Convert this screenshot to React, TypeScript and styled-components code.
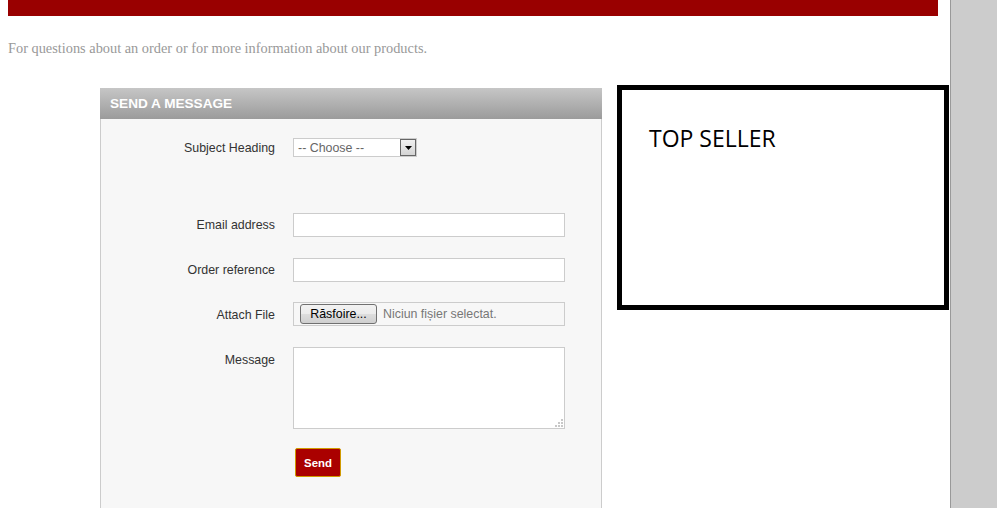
import styled, { createGlobalStyle } from "styled-components";

const GlobalStyle = createGlobalStyle`
  html, body {
    margin: 0;
    padding: 0;
    background: #ffffff;
  }
  body {
    font-family: "Liberation Sans", Arial, sans-serif;
  }
`;

const Page = styled.div`
  display: flex;
  height: 508px;
  overflow: hidden;
`;

const Main = styled.div`
  width: 950px;
  flex-shrink: 0;
  padding-left: 8px;
  box-sizing: border-box;
`;

const Sidebar = styled.div`
  flex: 1;
  background: #cccccc;
  border-left: 1px solid #999999;
`;

const TopBar = styled.div`
  width: 930px;
  height: 16px;
  background: #990000;
`;

const Intro = styled.p`
  margin: 24px 0 0;
  font-family: "Liberation Serif", "Times New Roman", serif;
  font-size: 14.35px;
  line-height: 16px;
  color: #999999;
`;

const ContentRow = styled.div`
  display: flex;
  align-items: flex-start;
  margin-top: 29px;
`;

const FormBox = styled.div`
  width: 502px;
  margin: 3px 0 0 92px;
  flex-shrink: 0;
`;

const FormHeader = styled.h3`
  margin: 0;
  height: 31px;
  padding-left: 10px;
  background: linear-gradient(to bottom, #c6c6c6 0%, #9b9b9b 100%);
  color: #ffffff;
  font-size: 13.6px;
  font-weight: bold;
  line-height: 31px;
`;

const FormBody = styled.div`
  background: #f7f7f7;
  border-left: 1px solid #cccccc;
  border-right: 1px solid #cccccc;
  padding: 19px 0 40px;
  min-height: 380px;
`;

const FormRow = styled.div<{ $gap: number; $top?: boolean }>`
  display: grid;
  grid-template-columns: 174px 272px;
  column-gap: 18px;
  align-items: ${({ $top }) => ($top ? "start" : "center")};
  margin-top: ${({ $gap }) => $gap}px;
`;

const Label = styled.label<{ $offset?: number }>`
  text-align: right;
  font-size: 12.4px;
  color: #333333;
  padding-top: ${({ $offset }) => $offset || 0}px;
`;

const FakeSelect = styled.div`
  width: 124px;
  height: 19px;
  box-sizing: border-box;
  border: 1px solid #cccccc;
  background: #ffffff;
  display: flex;
  align-items: center;
  justify-content: space-between;
  padding: 0 0 0 4px;
  font-size: 12.4px;
  color: #666666;
`;

const SelectArrow = styled.span`
  width: 16px;
  height: 17px;
  box-sizing: border-box;
  border: 1px solid #666666;
  background: linear-gradient(to bottom, #f0f0f0, #d4d4d4);
  display: flex;
  align-items: center;
  justify-content: center;
`;

const TextInput = styled.input`
  width: 272px;
  height: 24px;
  box-sizing: border-box;
  border: 1px solid #cccccc;
  background: #ffffff;
  margin: 0;
  padding: 0 4px;
  font-size: 12px;
`;

const FileBox = styled.div`
  width: 272px;
  height: 24px;
  box-sizing: border-box;
  border: 1px solid #cccccc;
  background: #f7f7f7;
  display: flex;
  align-items: center;
  padding-left: 6px;
  gap: 6px;
  font-size: 12.4px;
  color: #777777;
`;

const BrowseButton = styled.span`
  width: 77px;
  height: 20px;
  box-sizing: border-box;
  border: 1px solid #707070;
  border-radius: 3px;
  background: linear-gradient(to bottom, #f2f2f2 0%, #ebebeb 50%, #dddddd 51%, #cfcfcf 100%);
  color: #000000;
  display: flex;
  align-items: center;
  justify-content: center;
  font-size: 12.4px;
`;

const AreaWrap = styled.div`
  position: relative;
  width: 272px;
  height: 82px;
`;

const MessageArea = styled.textarea`
  width: 272px;
  height: 82px;
  box-sizing: border-box;
  border: 1px solid #cccccc;
  background: #ffffff;
  margin: 0;
  resize: none;
  display: block;
`;

const Grip = styled.svg`
  position: absolute;
  right: 2px;
  bottom: 2px;
`;

const SendButton = styled.button`
  grid-column: 2;
  justify-self: start;
  margin-left: 2px;
  width: 46px;
  height: 29px;
  box-sizing: border-box;
  background: #aa0000;
  border: 1px solid #d09a00;
  border-radius: 2px;
  color: #ffffff;
  font-family: "Liberation Sans", Arial, sans-serif;
  font-size: 11.4px;
  font-weight: bold;
  padding: 0;
  cursor: pointer;
`;

const TopSeller = styled.div`
  width: 332px;
  height: 225px;
  box-sizing: border-box;
  margin-left: 15px;
  border: 5px solid #000000;
  padding: 32px 0 0 27px;
  background: #ffffff;
  font-family: "Open Sans", sans-serif;
  font-size: 23px;
  color: #000000;
`;

const GripIcon = () => (
  <Grip width="9" height="9" viewBox="0 0 9 9">
    <rect x="7" y="1" width="2" height="2" fill="#c8c8c8" />
    <rect x="4" y="4" width="2" height="2" fill="#c8c8c8" />
    <rect x="7" y="4" width="2" height="2" fill="#c8c8c8" />
    <rect x="1" y="7" width="2" height="2" fill="#c8c8c8" />
    <rect x="4" y="7" width="2" height="2" fill="#c8c8c8" />
    <rect x="7" y="7" width="2" height="2" fill="#c8c8c8" />
  </Grip>
);

const App = () => {
  return (
    <>
      <GlobalStyle />
      <Page>
        <Main>
          <TopBar />
          <Intro>
            For questions about an order or for more information about our
            products.
          </Intro>
          <ContentRow>
            <FormBox>
              <FormHeader>SEND A MESSAGE</FormHeader>
              <FormBody>
                <FormRow $gap={0}>
                  <Label>Subject Heading</Label>
                  <FakeSelect>
                    -- Choose --
                    <SelectArrow>
                      <svg width="7" height="4" viewBox="0 0 7 4">
                        <path d="M0 0 H7 L3.5 4 Z" fill="#000" />
                      </svg>
                    </SelectArrow>
                  </FakeSelect>
                </FormRow>
                <FormRow $gap={56}>
                  <Label>Email address</Label>
                  <TextInput type="text" />
                </FormRow>
                <FormRow $gap={21}>
                  <Label>Order reference</Label>
                  <TextInput type="text" />
                </FormRow>
                <FormRow $gap={20}>
                  <Label $offset={2}>Attach File</Label>
                  <FileBox>
                    <BrowseButton>Răsfoire...</BrowseButton>
                    Niciun fișier selectat.
                  </FileBox>
                </FormRow>
                <FormRow $gap={21} $top>
                  <Label $offset={6}>Message</Label>
                  <AreaWrap>
                    <MessageArea />
                    <GripIcon />
                  </AreaWrap>
                </FormRow>
                <FormRow $gap={19}>
                  <SendButton>Send</SendButton>
                </FormRow>
              </FormBody>
            </FormBox>
            <TopSeller>TOP SELLER</TopSeller>
          </ContentRow>
        </Main>
        <Sidebar />
      </Page>
    </>
  );
};

export default App;
